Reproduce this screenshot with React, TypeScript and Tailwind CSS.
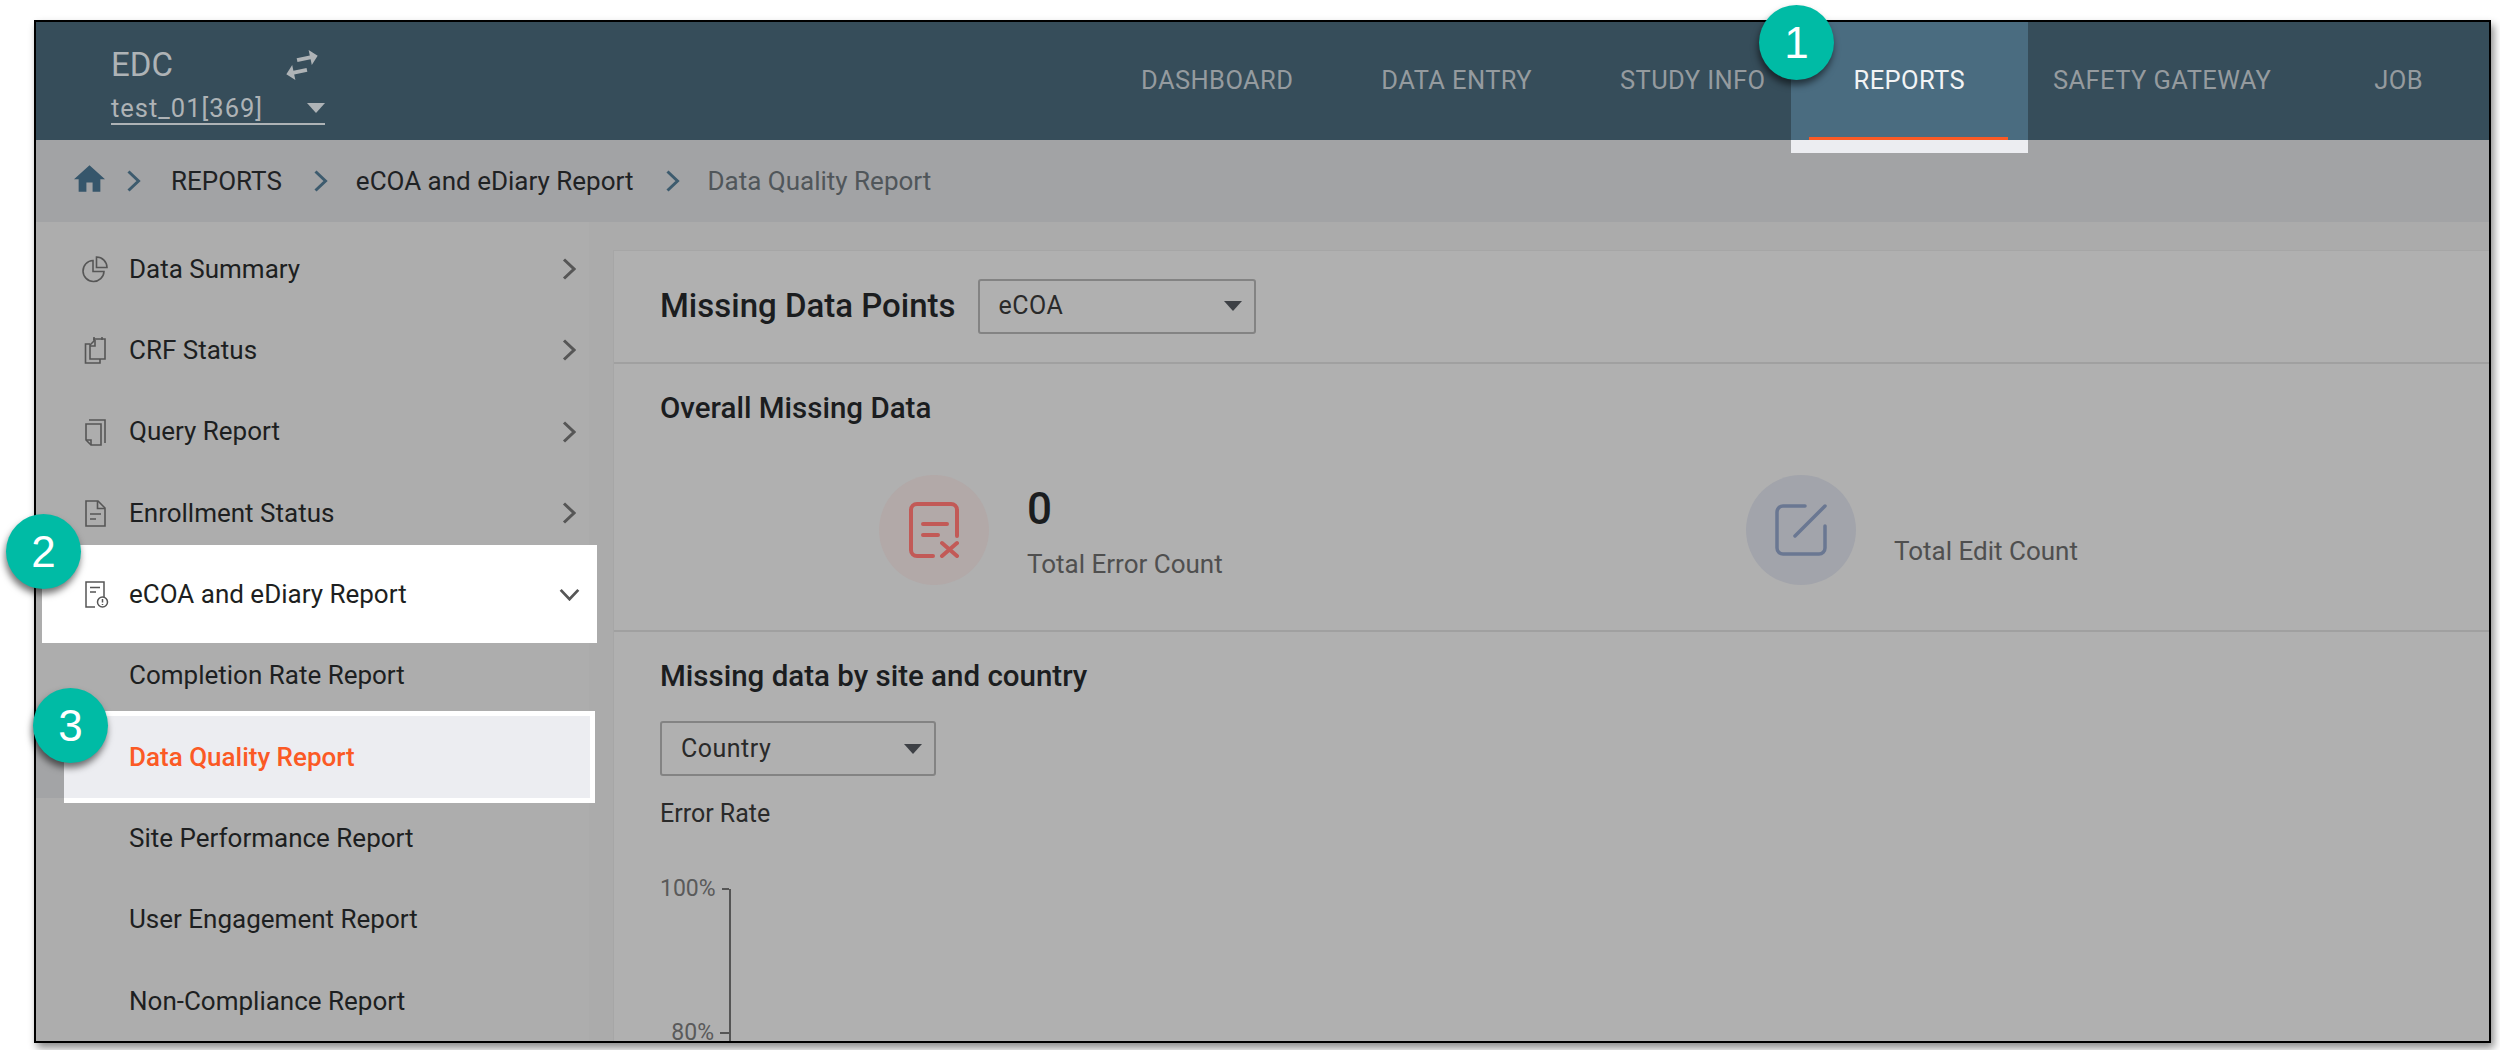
import React from "react"

const navItems = ["DASHBOARD", "DATA ENTRY", "STUDY INFO", "REPORTS", "SAFETY GATEWAY", "JOB"]

function Chevron({ className }: { className: string }) {
  return (
    <svg viewBox="0 0 14 22" className={className} fill="none" stroke="currentColor" strokeWidth="3">
      <polyline points="2,1.5 12,11 2,20.5" />
    </svg>
  )
}

function Triangle({ className }: { className: string }) {
  return (
    <svg viewBox="0 0 18 10" className={className} fill="currentColor">
      <polygon points="0,0 18,0 9,10" />
    </svg>
  )
}

function Badge({ n, className }: { n: string; className: string }) {
  return (
    <div
      className={`absolute z-30 flex h-[75px] w-[75px] items-center justify-center rounded-full bg-[#00bba5] text-[44px] leading-none text-white shadow-[-1px_5px_7px_rgba(0,0,0,0.55)] font-['Liberation_Sans',sans-serif] ${className}`}
    >
      {n}
    </div>
  )
}

const iconClass = "h-[28px] w-[28px] text-[#565656]"

function PieIcon() {
  return (
    <svg viewBox="0 0 28 28" className={iconClass} fill="none" stroke="currentColor" strokeWidth="1.6">
      <path d="M12 5.5a10.5 10.5 0 1 0 11 11H12z" />
      <path d="M15.5 2v10.5H26A10.5 10.5 0 0 0 15.5 2z" />
    </svg>
  )
}

function CrfIcon() {
  return (
    <svg viewBox="0 0 28 28" className={iconClass} fill="none" stroke="currentColor" strokeWidth="1.6">
      <path d="M9 8H4.5v19H19v-4" />
      <path d="M13 3h11v20H9V9l4-4z" />
      <path d="M9 10h5V4" />
      <path d="M13 1v3M21 1v3" />
    </svg>
  )
}

function QueryIcon() {
  return (
    <svg viewBox="0 0 28 28" className={iconClass} fill="none" stroke="currentColor" strokeWidth="1.6">
      <path d="M8 2h16v23" />
      <path d="M5 6h15v21H10l-5-5z" />
      <path d="M5 22h5v5" />
    </svg>
  )
}

function EnrollIcon() {
  return (
    <svg viewBox="0 0 28 28" className={iconClass} fill="none" stroke="currentColor" strokeWidth="1.6">
      <path d="M5 2h12l7 7v18H5z" />
      <path d="M16.5 2v7.5H24" />
      <path d="M9 15h11M9 20h6" />
    </svg>
  )
}

function EcoaIcon() {
  return (
    <svg viewBox="0 0 28 28" className={iconClass} fill="none" stroke="currentColor" strokeWidth="1.5">
      <path d="M14 27H5V2h18v15" />
      <path d="M9 7.5h10M9 12h6" />
      <circle cx="21.5" cy="22" r="5" />
      <path d="M21.5 19v3.5M21.5 24v1" />
    </svg>
  )
}

function Row({ icon, label }: { icon: React.ReactNode; label: string }) {
  return (
    <div className="flex h-[81.33px] items-center pl-[45px] text-[#1d1f21]">
      <div className="flex w-[48px] shrink-0">{icon}</div>
      <span className="text-[26px]">{label}</span>
      <Chevron className="ml-auto mr-[13px] h-[22px] w-[14px] text-[#565656]" />
    </div>
  )
}

function SubRow({ label }: { label: string }) {
  return (
    <div className="flex h-[81.33px] items-center pl-[93px] text-[26px] text-[#1d1f21]">{label}</div>
  )
}

function SelectBox({ label, className }: { label: string; className: string }) {
  return (
    <div
      className={`flex items-center justify-between rounded-[3px] border-2 border-[#838383] pl-[19px] pr-[12px] text-[25px] tracking-[0.5px] text-[#2a2a2a] ${className}`}
    >
      {label}
      <Triangle className="h-[10px] w-[18px] text-[#3d4045]" />
    </div>
  )
}

export default function App() {
  return (
    <div className="relative h-[1050px] w-[2500px] overflow-hidden bg-white font-['Roboto',sans-serif]">
      <Badge n="1" className="left-[1759px] top-[5px]" />
      <Badge n="2" className="left-[6px] top-[514px]" />
      <Badge n="3" className="left-[33px] top-[688px]" />

      <div className="ml-[34px] mt-[20px] flex h-[1023px] w-[2457px] flex-col border-2 border-black shadow-[3px_5px_8px_rgba(0,0,0,0.45)]">
        {/* top nav */}
        <header className="relative z-10 flex h-[118px] shrink-0 bg-[#364d5a]">
          <div className="pl-[75px] pt-[21px]">
            <div className="flex h-[44px] items-center">
              <span className="text-[33px] leading-[44px] text-[#aeb3b6]">EDC</span>
              <svg viewBox="0 0 24 24" className="ml-[106px] h-[46px] w-[46px] -rotate-12 text-[#aeb3b6]" fill="currentColor">
                <path d="M6.99 11L3 15l3.99 4v-3H14v-2H6.99v-3zM21 9l-3.99-4v3H10v2h7.01v3L21 9z" />
              </svg>
            </div>
            <div className="mt-[6px] flex h-[32px] w-[214px] items-center justify-between border-b-2 border-[#aeb3b6] text-[25.5px] tracking-[1px] text-[#aeb3b6]">
              test_01[369]
              <Triangle className="h-[10px] w-[18px]" />
            </div>
          </div>

          <nav className="ml-auto flex items-stretch gap-[88px] pr-[66px] text-[25.5px] tracking-[0.4px]">
            {navItems.map((item) =>
              item === "REPORTS" ? (
                <div key={item} className="relative -mx-[63px] flex items-center bg-[#4a6c80] px-[63px] pb-[2px] text-[#f2f4f5]">
                  {item}
                  <div className="absolute bottom-0 left-[18px] right-[20px] h-[3px] bg-[#fb5a25]" />
                  <div className="absolute left-0 right-0 top-full h-[13px] bg-[#ecedf1]" />
                </div>
              ) : (
                <div key={item} className={`flex items-center pb-[2px] text-[#959b9f] ${item === "JOB" ? "ml-[15px]" : ""}`}>
                  {item}
                </div>
              )
            )}
          </nav>
        </header>

        {/* breadcrumb */}
        <div className="flex h-[82px] shrink-0 items-center bg-[#a2a3a5] pl-[38px] text-[26px]">
          <svg viewBox="2 3 20 17" className="mb-[5px] h-[27px] w-[31px] text-[#36566b]" fill="currentColor">
            <path d="M10 20v-6h4v6h5v-8h3L12 3 2 12h3v8z" />
          </svg>
          <Chevron className="ml-[21px] h-[22px] w-[15px] text-[#3d5b6e]" />
          <span className="ml-[30px] text-[#1f2224]">REPORTS</span>
          <Chevron className="ml-[31px] h-[22px] w-[15px] text-[#3d5b6e]" />
          <span className="ml-[28px] text-[#1f2224]">eCOA and eDiary Report</span>
          <Chevron className="ml-[31px] h-[22px] w-[15px] text-[#3d5b6e]" />
          <span className="ml-[28px] text-[#50565a]">Data Quality Report</span>
        </div>

        <div className="flex min-h-0 flex-1 overflow-hidden">
          {/* sidebar */}
          <aside className="w-[553px] shrink-0 bg-[#adadad] pt-[6.5px]">
            <Row icon={<PieIcon />} label="Data Summary" />
            <Row icon={<CrfIcon />} label="CRF Status" />
            <Row icon={<QueryIcon />} label="Query Report" />
            <Row icon={<EnrollIcon />} label="Enrollment Status" />
            <div className="relative z-10 -my-[8.33px] -mr-[8px] ml-[6px] flex h-[98px] items-center bg-white pl-[39px] text-[#1d1f21]">
              <div className="flex w-[48px] shrink-0">
                <EcoaIcon />
              </div>
              <span className="text-[26px]">eCOA and eDiary Report</span>
              <svg viewBox="0 0 22 14" className="ml-auto mr-[17px] h-[13px] w-[21px] text-[#565656]" fill="none" stroke="currentColor" strokeWidth="3">
                <polyline points="1.5,2 11,12 20.5,2" />
              </svg>
            </div>
            <SubRow label="Completion Rate Report" />
            <div className="relative z-10 -mr-[6px] flex h-[92px] -my-[5.33px]">
              <div className="my-[5px] w-[28px] shrink-0 bg-[#a3a4a6]" />
              <div className="flex flex-1 items-center border-y-[5px] border-r-[5px] border-white bg-[#ecedf1] pl-[65px] text-[26px] font-medium text-[#fb5a25]">
                Data Quality Report
              </div>
            </div>
            <SubRow label="Site Performance Report" />
            <SubRow label="User Engagement Report" />
            <SubRow label="Non-Compliance Report" />
          </aside>

          {/* gutter + card */}
          <main className="flex min-w-0 flex-1 flex-col bg-[#ababab] pl-[24px] pt-[28px]">
            <div className="flex-1 border-l border-t border-[#a6a6a6] bg-[#b0b0b0]">
              <div className="flex h-[113px] items-center border-b-2 border-[#a0a0a0] pb-[1px] pl-[46px]">
                <h1 className="text-[33px] font-medium text-[#1b1d1f]">Missing Data Points</h1>
                <SelectBox label="eCOA" className="ml-[22px] h-[55px] w-[278px]" />
              </div>

              <div className="h-[268px] border-b-2 border-[#a0a0a0] pl-[46px] pt-[24px]">
                <h2 className="text-[29.5px] font-medium leading-[40px] text-[#1b1d1f]">Overall Missing Data</h2>
                <div className="mt-[47px] flex">
                  <div className="ml-[219px] flex h-[110px] w-[110px] shrink-0 items-center justify-center rounded-full bg-[#b2a9a8]">
                    <svg viewBox="0 0 50 56" className="h-[56px] w-[50px] text-[#c25a57]" fill="none" stroke="currentColor" strokeWidth="4" strokeLinecap="round">
                      <path d="M24 54H8a6 6 0 0 1-6-6V8a6 6 0 0 1 6-6h34a6 6 0 0 1 6 6v26" />
                      <path d="M14 22h24M14 33h15M33 41l15 13M48 41L33 54" />
                    </svg>
                  </div>
                  <div className="ml-[38px] w-[719px] shrink-0 text-[#4f4f4f]">
                    <div className="h-[72px] pt-[4px] text-[44px] font-medium leading-[60px] text-[#1b1d1f]">0</div>
                    <div className="text-[26px] leading-[34px]">Total Error Count</div>
                  </div>
                  <div className="flex h-[110px] w-[110px] shrink-0 items-center justify-center rounded-full bg-[#a2a4ab]">
                    <svg viewBox="0 0 52 52" className="h-[52px] w-[52px] text-[#6a7792]" fill="none" stroke="currentColor" strokeWidth="3.5" strokeLinecap="round">
                      <path d="M30 2H8a6 6 0 0 0-6 6v36a6 6 0 0 0 6 6h36a6 6 0 0 0 6-6V22" />
                      <path d="M20 32L50 2" />
                    </svg>
                  </div>
                  <div className="ml-[38px] mt-[59px] text-[26px] leading-[34px] text-[#4f4f4f]">Total Edit Count</div>
                </div>
              </div>

              <div className="pl-[46px] pt-[24px]">
                <h2 className="text-[29.5px] font-medium leading-[40px] text-[#1b1d1f]">Missing data by site and country</h2>
                <SelectBox label="Country" className="mt-[25px] h-[55px] w-[276px]" />
                <div className="mt-[21px] text-[25px] leading-[34px] text-[#2a2a2a]">Error Rate</div>
                <div className="mt-[58px] flex h-[170px] w-[71px] flex-col border-r-2 border-[#555] text-right text-[23px] text-[#5a5a5a]">
                  <div className="-mt-[8px] flex h-[16px] items-center justify-end leading-[16px]">
                    100%
                    <span className="ml-[6px] h-[2px] w-[9px] bg-[#555]" />
                  </div>
                  <div className="mt-[128px] flex h-[16px] items-center justify-end leading-[16px]">
                    80%
                    <span className="ml-[6px] h-[2px] w-[9px] bg-[#555]" />
                  </div>
                </div>
              </div>
            </div>
          </main>
        </div>
      </div>
    </div>
  )
}
